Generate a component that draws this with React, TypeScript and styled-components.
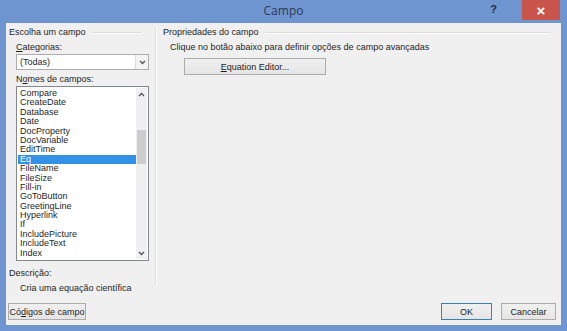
import styled, { createGlobalStyle } from 'styled-components';

const GlobalStyle = createGlobalStyle`
  html, body {
    margin: 0;
    padding: 0;
    width: 567px;
    height: 331px;
    overflow: hidden;
    font-family: 'Liberation Sans', Arial, sans-serif;
    font-size: 9px;
    color: #1e1e1e;
  }
`;

const FIELDS = [
  'Compare',
  'CreateDate',
  'Database',
  'Date',
  'DocProperty',
  'DocVariable',
  'EditTime',
  'Eq',
  'FileName',
  'FileSize',
  'Fill-in',
  'GoToButton',
  'GreetingLine',
  'Hyperlink',
  'If',
  'IncludePicture',
  'IncludeText',
  'Index',
];
const SELECTED = 'Eq';

const Chevron = ({ up }: { up?: boolean }) => (
  <svg width="7" height="5" viewBox="0 0 7 5">
    <path
      d={up ? 'M1 4 L3.5 1.5 L6 4' : 'M1 1 L3.5 3.5 L6 1'}
      fill="none"
      stroke="#555"
      strokeWidth="1.3"
    />
  </svg>
);

const App = () => {
  return (
    <>
      <GlobalStyle />
      <Window>
        <TitleBar>
          <Title>Campo</Title>
          <HelpBtn>?</HelpBtn>
          <CloseBtn>×</CloseBtn>
        </TitleBar>
        <Body>
          <Main>
            <LeftPane>
              <GroupHeader $lineEnd={8}>Escolha um campo</GroupHeader>
              <Indented>
                <FieldLabel>
                  <u>C</u>ategorias:
                </FieldLabel>
                <Select>
                  <SelectValue>(Todas)</SelectValue>
                  <SelectArrow>
                    <Chevron />
                  </SelectArrow>
                </Select>
                <FieldLabel>
                  N<u>o</u>mes de campos:
                </FieldLabel>
                <ListBox>
                  <ListItems>
                    {FIELDS.map((f) => (
                      <ListItem key={f} $selected={f === SELECTED}>
                        {f}
                      </ListItem>
                    ))}
                  </ListItems>
                  <ScrollBar>
                    <ScrollArrow>
                      <Chevron up />
                    </ScrollArrow>
                    <ScrollTrack>
                      <ScrollThumb />
                    </ScrollTrack>
                    <ScrollArrow>
                      <Chevron />
                    </ScrollArrow>
                  </ScrollBar>
                </ListBox>
              </Indented>
              <DescLabel>Descrição:</DescLabel>
              <DescText>Cria uma equação científica</DescText>
            </LeftPane>
            <Divider />
            <RightPane>
              <GroupHeader $lineEnd={6}>Propriedades do campo</GroupHeader>
              <Hint>Clique no botão abaixo para definir opções de campo avançadas</Hint>
              <EditorRow>
                <Button $width={142}>
                  <u>E</u>quation Editor...
                </Button>
              </EditorRow>
            </RightPane>
          </Main>
          <Footer>
            <Button $width={78}>
              Có<u>d</u>igos de campo
            </Button>
            <FooterRight>
              <Button $width={51} $default>
                OK
              </Button>
              <Button $width={55}>Cancelar</Button>
            </FooterRight>
          </Footer>
        </Body>
      </Window>
    </>
  );
};

const Window = styled.div`
  width: 567px;
  height: 331px;
  box-sizing: border-box;
  background: #6f95d0;
  padding: 0 6px 6px 6px;
  display: flex;
  flex-direction: column;
`;

const TitleBar = styled.div`
  height: 23px;
  position: relative;
  display: flex;
  align-items: center;
  justify-content: center;
`;

const Title = styled.div`
  font-family: 'Open Sans', 'Liberation Sans', sans-serif;
  font-size: 12px;
  color: #2b3a55;
  margin-top: -2px;
`;

const HelpBtn = styled.div`
  position: absolute;
  right: 64px;
  top: 3px;
  font-size: 11px;
  font-weight: bold;
  color: #22304a;
`;

const CloseBtn = styled.div`
  position: absolute;
  right: 1px;
  top: 0;
  width: 38px;
  height: 20px;
  background: #c9544c;
  color: #fff;
  font-size: 15px;
  font-weight: bold;
  display: flex;
  align-items: center;
  justify-content: center;
`;

const Body = styled.div`
  flex: 1;
  background: #f0f0f0;
  display: flex;
  flex-direction: column;
  padding: 4px 5px 5px 2px;
`;

const Main = styled.div`
  flex: 1;
  display: flex;
`;

const LeftPane = styled.div`
  width: 140px;
  padding-left: 1px;
  display: flex;
  flex-direction: column;
`;

const RightPane = styled.div`
  flex: 1;
  padding-left: 4px;
  display: flex;
  flex-direction: column;
`;

const Divider = styled.div`
  width: 1px;
  margin: 0 2px 18px 6px;
  background: #dcdcdc;
  border-right: 1px solid #fff;
`;

const GroupHeader = styled.div<{ $lineEnd: number }>`
  display: flex;
  align-items: center;
  gap: 6px;
  height: 11px;
  line-height: 11px;
  white-space: nowrap;
  margin-right: ${({ $lineEnd }) => $lineEnd}px;

  &::after {
    content: '';
    flex: 1;
    height: 1px;
    background: #dcdcdc;
    border-bottom: 1px solid #fff;
  }
`;

const Indented = styled.div`
  padding-left: 7px;
  display: flex;
  flex-direction: column;
`;

const FieldLabel = styled.div`
  margin-top: 4px;
  height: 11px;
  line-height: 11px;
  margin-bottom: 1px;
`;

const Select = styled.div`
  height: 16px;
  box-sizing: border-box;
  border: 1px solid #acacac;
  background: #fff;
  display: flex;
  align-items: stretch;
`;

const SelectValue = styled.div`
  flex: 1;
  padding-left: 3px;
  line-height: 14px;
`;

const SelectArrow = styled.div`
  width: 12px;
  border-left: 1px solid #dcdcdc;
  background: #f4f4f4;
  display: flex;
  align-items: center;
  justify-content: center;
`;

const ListBox = styled.div`
  height: 175px;
  box-sizing: border-box;
  border: 1px solid #828790;
  background: #fff;
  display: flex;
  padding: 1px;
`;

const ListItems = styled.div`
  flex: 1;
  padding-top: 1px;
  overflow: hidden;
`;

const ListItem = styled.div<{ $selected?: boolean }>`
  height: 9.4px;
  line-height: 9.4px;
  padding-left: 2px;
  white-space: nowrap;
  background: ${({ $selected }) => ($selected ? '#3391e6' : 'transparent')};
  color: ${({ $selected }) => ($selected ? '#fff' : '#1e1e1e')};
`;

const ScrollBar = styled.div`
  width: 11px;
  background: #f0f0f0;
  display: flex;
  flex-direction: column;
`;

const ScrollArrow = styled.div`
  height: 12px;
  display: flex;
  align-items: center;
  justify-content: center;
`;

const ScrollTrack = styled.div`
  flex: 1;
  padding-top: 30px;
`;

const ScrollThumb = styled.div`
  height: 34px;
  margin: 0 1px;
  background: #cdcdcd;
`;

const DescLabel = styled.div`
  margin-top: 7px;
  height: 11px;
  line-height: 11px;
`;

const DescText = styled.div`
  margin-top: 4px;
  padding-left: 11px;
  height: 11px;
  line-height: 11px;
`;

const Hint = styled.div`
  margin-top: 4px;
  padding-left: 7px;
  height: 11px;
  line-height: 11px;
`;

const EditorRow = styled.div`
  margin-top: 5px;
  padding-left: 21px;
  display: flex;
`;

const Button = styled.div<{ $width: number; $default?: boolean }>`
  width: ${({ $width }) => $width}px;
  height: 17px;
  box-sizing: border-box;
  border: 1px solid ${({ $default }) => ($default ? '#3c7fb1' : '#acacac')};
  background: linear-gradient(#f0f0f0, #e5e5e5);
  display: flex;
  align-items: center;
  justify-content: center;
  white-space: nowrap;
`;

const Footer = styled.div`
  height: 17px;
  display: flex;
  justify-content: space-between;
  align-items: center;
`;

const FooterRight = styled.div`
  display: flex;
  gap: 9px;
`;

export default App;
